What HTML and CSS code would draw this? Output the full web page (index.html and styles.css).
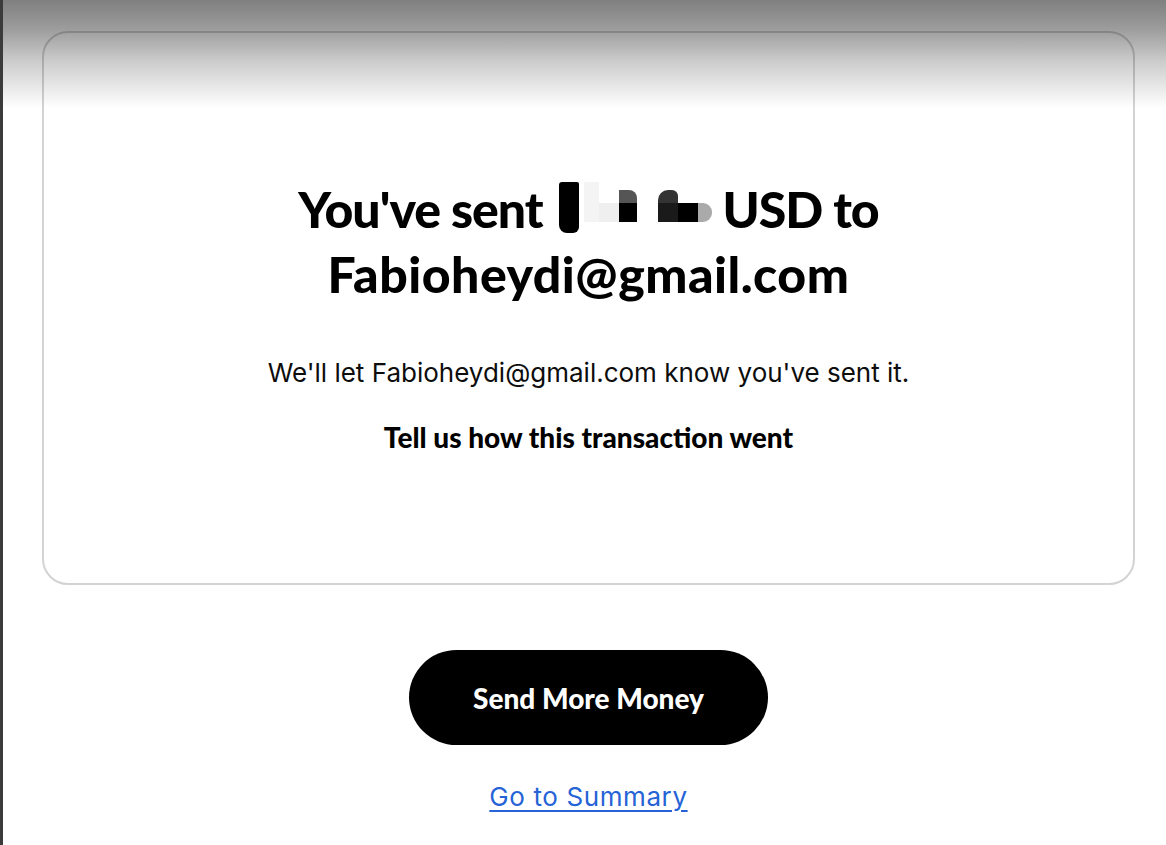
FILE: index.html
```html
<!DOCTYPE html>
<html lang="en">
<head>
    <meta charset="UTF-8">
    <meta name="viewport" content="width=device-width, initial-scale=1.0">
    <title>Payment sent</title>
    <link rel="stylesheet" href="styles.css">
</head>
<body>

    <div class="page">
        <div class="result-card">
            <h1 class="result-title">
                You've sent
                <span class="redact"><span class="redact-row">
                    <span class="blk blk-tall"></span>
                    <span class="blk blk-faint"></span>
                    <span class="blk blk-pale"></span>
                    <span class="blk-col">
                        <span class="blk blk-top grey"></span>
                        <span class="blk blk-low black"></span>
                    </span>
                    <span class="blk blk-space"></span>
                    <span class="blk-col">
                        <span class="blk blk-top swirl"></span>
                        <span class="blk blk-low dark"></span>
                    </span>
                    <span class="blk blk-low black"></span>
                    <span class="blk blk-low end"></span>
                </span></span>
                USD to<br><span class="recipient">Fabioheydi@gmail.com</span>
            </h1>
            <p class="result-note">We'll let Fabioheydi@gmail.com know you've sent it.</p>
            <p class="result-ask">Tell us how this transaction went</p>
        </div>

        <div class="actions">
            <button class="btn-primary">Send More Money</button>
            <a href="#" class="summary-link">Go to Summary</a>
        </div>
    </div>

</body>
</html>
```

FILE: styles.css
```css
* {
    margin: 0;
    padding: 0;
    box-sizing: border-box;
}

body {
    font-family: Inter, "Noto Sans", sans-serif;
    background: #fff;
    color: #000;
    overflow: hidden;
}

/* dark edge on the left and the shade at the top */
.page {
    position: relative;
    min-height: 100vh;
    border-left: 3px solid #3b3b3b;
    padding: 31px 31px 0 39px;
}

.page::before {
    content: "";
    position: absolute;
    top: 0;
    left: 0;
    right: 0;
    height: 108px;
    background: linear-gradient(rgba(0, 0, 0, 0.5), rgba(0, 0, 0, 0.38) 28%, rgba(0, 0, 0, 0.2) 57%, rgba(0, 0, 0, 0) 100%);
    pointer-events: none;
}

.result-card {
    border: 2px solid #d3d3d3;
    border-radius: 26px;
    height: 554px;
    padding-top: 144px;
    text-align: center;
}

.result-title {
    font-family: Lato, sans-serif;
    font-weight: 900;
    font-size: 50px;
    line-height: 65px;
    letter-spacing: -1px;
}

.recipient {
    letter-spacing: 0.5px;
}

/* blurred-out amount */
.redact {
    display: inline-block;
    overflow: hidden;
    vertical-align: -5px;
    margin: 0 0 0 5px;
}

.redact-row {
    display: flex;
    align-items: flex-end;
}

.blk {
    display: block;
}

.blk-col {
    display: flex;
    flex-direction: column;
    margin-bottom: 11px;
}

.blk-tall {
    width: 20px;
    height: 51px;
    background: #000;
    border-radius: 3px 2px 6px 8px;
}

.blk-faint {
    width: 15px;
    height: 40px;
    margin: 0 0 11px 5px;
    background: #f4f4f4;
}

.blk-pale {
    width: 20px;
    height: 19px;
    margin-bottom: 11px;
    background: #efefef;
}

.blk-top {
    width: 18px;
    height: 13px;
}

.blk-low {
    width: 18px;
    height: 19px;
}

.redact-row > .blk-low {
    margin-bottom: 11px;
    width: 20px;
}

.grey {
    background: #555;
    border-radius: 0 8px 0 0;
}

.swirl {
    width: 20px;
    background: #333;
    border-radius: 10px 6px 0 0;
}

.black {
    background: #000;
}

.dark {
    width: 20px;
    background: #1a1a1a;
}

.blk-space {
    width: 21px;
    height: 1px;
    margin-bottom: 11px;
}

.redact-row > .end {
    width: 14px;
    background: #aaa;
    border-radius: 0 9px 9px 0;
}

.result-note {
    margin-top: 50px;
    font-size: 26px;
    line-height: 32px;
    color: #0d0d0d;
}

.result-ask {
    margin-top: 32px;
    font-family: Lato, sans-serif;
    font-weight: 900;
    font-size: 28px;
    line-height: 32px;
}

.actions {
    display: flex;
    flex-direction: column;
    align-items: center;
    margin-top: 65px;
}

.btn-primary {
    width: 359px;
    height: 95px;
    border: none;
    border-radius: 48px;
    background: #000;
    color: #fff;
    font-family: Lato, sans-serif;
    font-weight: 900;
    font-size: 28px;
    cursor: pointer;
}

.summary-link {
    margin-top: 36px;
    font-size: 26px;
    line-height: 32px;
    letter-spacing: 0.6px;
    color: #2563d6;
    text-underline-offset: 4px;
}
```
